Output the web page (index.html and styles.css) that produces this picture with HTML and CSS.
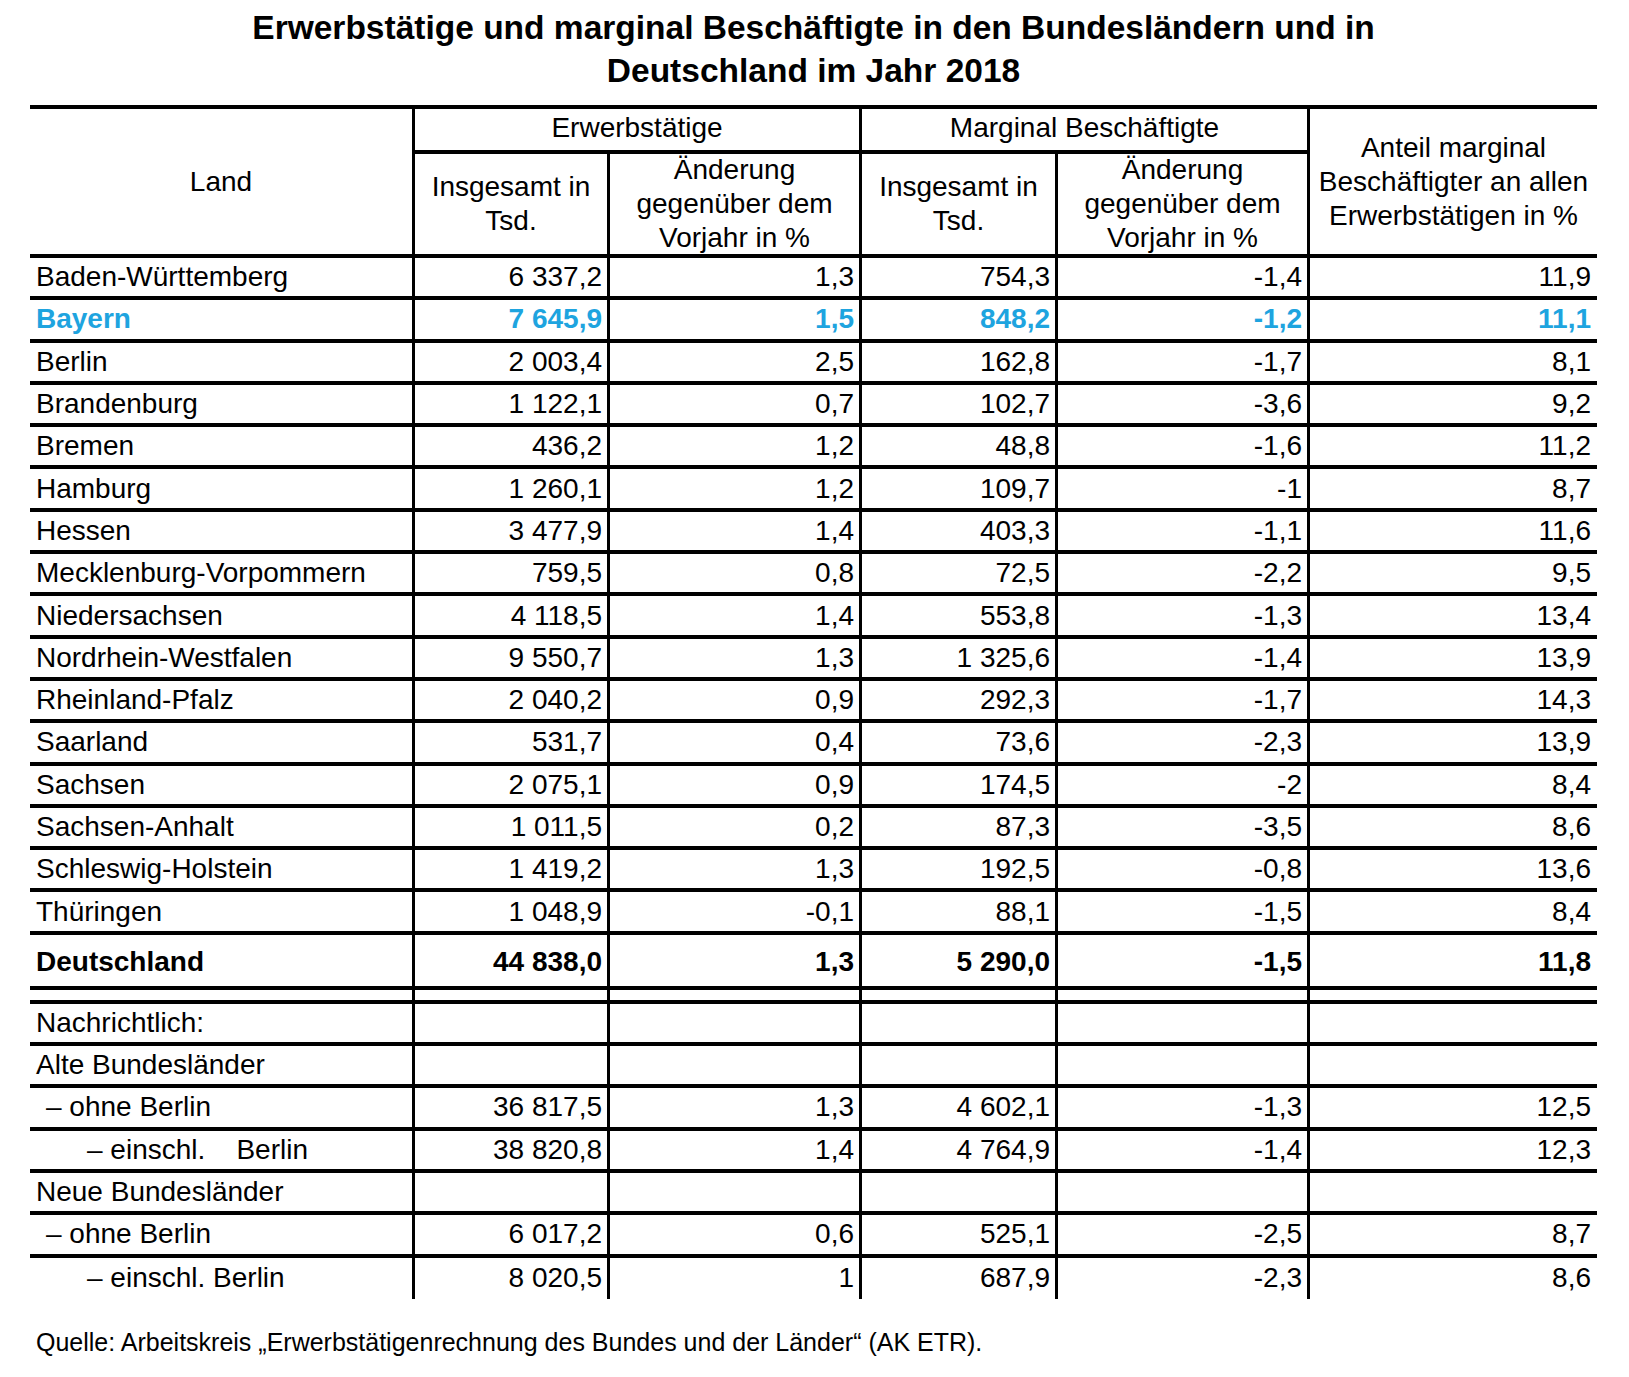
FILE: index.html
```html
<!DOCTYPE html>
<html lang="de">
<head>
<meta charset="utf-8">
<title>Erwerbstätige und marginal Beschäftigte 2018</title>
<link rel="stylesheet" href="styles.css">
</head>
<body>
<div class="page">
  <h1 class="title">Erwerbstätige und marginal Beschäftigte in den Bundesländern und in<br>Deutschland im Jahr 2018</h1>
  <div class="tbl">
    <div class="hd h-land">Land</div>
    <div class="hd h-grp g1">Erwerbstätige</div>
    <div class="hd h-grp g2">Marginal Beschäftigte</div>
    <div class="hd h-anteil">Anteil marginal<br>Beschäftigter an allen<br>Erwerbstätigen in %</div>
    <div class="hd h-sub s1">Insgesamt in<br>Tsd.</div>
    <div class="hd h-sub s2">Änderung<br>gegenüber dem<br>Vorjahr in %</div>
    <div class="hd h-sub s3">Insgesamt in<br>Tsd.</div>
    <div class="hd h-sub s4">Änderung<br>gegenüber dem<br>Vorjahr in %</div>

    <div class="row"><div>Baden-Württemberg</div><div>6 337,2</div><div>1,3</div><div>754,3</div><div>-1,4</div><div>11,9</div></div>
    <div class="row hl"><div>Bayern</div><div>7 645,9</div><div>1,5</div><div>848,2</div><div>-1,2</div><div>11,1</div></div>
    <div class="row"><div>Berlin</div><div>2 003,4</div><div>2,5</div><div>162,8</div><div>-1,7</div><div>8,1</div></div>
    <div class="row"><div>Brandenburg</div><div>1 122,1</div><div>0,7</div><div>102,7</div><div>-3,6</div><div>9,2</div></div>
    <div class="row"><div>Bremen</div><div>436,2</div><div>1,2</div><div>48,8</div><div>-1,6</div><div>11,2</div></div>
    <div class="row"><div>Hamburg</div><div>1 260,1</div><div>1,2</div><div>109,7</div><div>-1</div><div>8,7</div></div>
    <div class="row"><div>Hessen</div><div>3 477,9</div><div>1,4</div><div>403,3</div><div>-1,1</div><div>11,6</div></div>
    <div class="row"><div>Mecklenburg-Vorpommern</div><div>759,5</div><div>0,8</div><div>72,5</div><div>-2,2</div><div>9,5</div></div>
    <div class="row"><div>Niedersachsen</div><div>4 118,5</div><div>1,4</div><div>553,8</div><div>-1,3</div><div>13,4</div></div>
    <div class="row"><div>Nordrhein-Westfalen</div><div>9 550,7</div><div>1,3</div><div>1 325,6</div><div>-1,4</div><div>13,9</div></div>
    <div class="row"><div>Rheinland-Pfalz</div><div>2 040,2</div><div>0,9</div><div>292,3</div><div>-1,7</div><div>14,3</div></div>
    <div class="row"><div>Saarland</div><div>531,7</div><div>0,4</div><div>73,6</div><div>-2,3</div><div>13,9</div></div>
    <div class="row"><div>Sachsen</div><div>2 075,1</div><div>0,9</div><div>174,5</div><div>-2</div><div>8,4</div></div>
    <div class="row"><div>Sachsen-Anhalt</div><div>1 011,5</div><div>0,2</div><div>87,3</div><div>-3,5</div><div>8,6</div></div>
    <div class="row"><div>Schleswig-Holstein</div><div>1 419,2</div><div>1,3</div><div>192,5</div><div>-0,8</div><div>13,6</div></div>
    <div class="row"><div>Thüringen</div><div>1 048,9</div><div>-0,1</div><div>88,1</div><div>-1,5</div><div>8,4</div></div>
    <div class="row total"><div>Deutschland</div><div>44 838,0</div><div>1,3</div><div>5 290,0</div><div>-1,5</div><div>11,8</div></div>
    <div class="row gap"><div></div><div></div><div></div><div></div><div></div><div></div></div>
    <div class="row"><div>Nachrichtlich:</div><div></div><div></div><div></div><div></div><div></div></div>
    <div class="row"><div>Alte Bundesländer</div><div></div><div></div><div></div><div></div><div></div></div>
    <div class="row"><div class="ind1">– ohne Berlin</div><div>36 817,5</div><div>1,3</div><div>4 602,1</div><div>-1,3</div><div>12,5</div></div>
    <div class="row"><div class="ind2">– einschl.    Berlin</div><div>38 820,8</div><div>1,4</div><div>4 764,9</div><div>-1,4</div><div>12,3</div></div>
    <div class="row"><div>Neue Bundesländer</div><div></div><div></div><div></div><div></div><div></div></div>
    <div class="row"><div class="ind1">– ohne Berlin</div><div>6 017,2</div><div>0,6</div><div>525,1</div><div>-2,5</div><div>8,7</div></div>
    <div class="row end"><div class="ind2">– einschl. Berlin</div><div>8 020,5</div><div>1</div><div>687,9</div><div>-2,3</div><div>8,6</div></div>
  </div>
  <p class="src">Quelle: Arbeitskreis „Erwerbstätigenrechnung des Bundes und der Länder“ (AK ETR).</p>
</div>
</body>
</html>
```

FILE: styles.css
```css
html, body {
  margin: 0;
  padding: 0;
  background: #ffffff;
}

body {
  font-family: "Liberation Sans", Arial, sans-serif;
  color: #000000;
}

.page {
  width: 1567px;
  margin-left: 30px;
}

.title {
  margin: 6px 0 0;
  font-size: 33.5px;
  line-height: 43px;
  font-weight: bold;
  text-align: center;
}

.tbl {
  margin-top: 13px;
  display: grid;
  grid-template-columns: 382px 195px 252px 196px 252px 290px;
  grid-template-rows: 45px 104px;
  border-top: 4px solid #000;
  font-size: 28px;
}

.hd {
  box-sizing: border-box;
  display: flex;
  align-items: center;
  justify-content: center;
  text-align: center;
  line-height: 34px;
  border-bottom: 4px solid #000;
}

.h-land {
  grid-column: 1;
  grid-row: 1 / span 2;
}

.h-grp {
  grid-row: 1;
  padding-bottom: 4px;
  border-left: 3px solid #000;
}

.g1 {
  grid-column: 2 / span 2;
}

.g2 {
  grid-column: 4 / span 2;
}

.h-anteil {
  grid-column: 6;
  grid-row: 1 / span 2;
  border-left: 3px solid #000;
}

.h-sub {
  grid-row: 2;
  border-left: 3px solid #000;
}

.s1 { grid-column: 2; }
.s2 { grid-column: 3; }
.s3 { grid-column: 4; }
.s4 { grid-column: 5; }

.row {
  display: contents;
}

.row > div {
  box-sizing: border-box;
  height: 42.3px;
  display: flex;
  align-items: center;
  justify-content: flex-end;
  white-space: pre;
  padding: 0 5px 0 0;
  border-bottom: 4px solid #000;
  border-left: 3px solid #000;
}

.row > div:first-child {
  justify-content: flex-start;
  padding: 0 0 0 6px;
  border-left: none;
}

.row > div:last-child {
  padding-right: 6px;
}

.row > div.ind1 {
  padding-left: 16px;
}

.row > div.ind2 {
  padding-left: 57px;
}

.row.hl > div {
  color: #1ea4df;
  font-weight: bold;
}

.row.total > div {
  height: 55px;
  padding-top: 4px;
  font-weight: bold;
}

.row.gap > div {
  height: 14px;
}

.row.end > div {
  height: 41px;
  border-bottom: none;
}

.src {
  margin: 28px 0 0;
  padding-left: 6px;
  font-size: 25px;
  line-height: 30px;
}
```
